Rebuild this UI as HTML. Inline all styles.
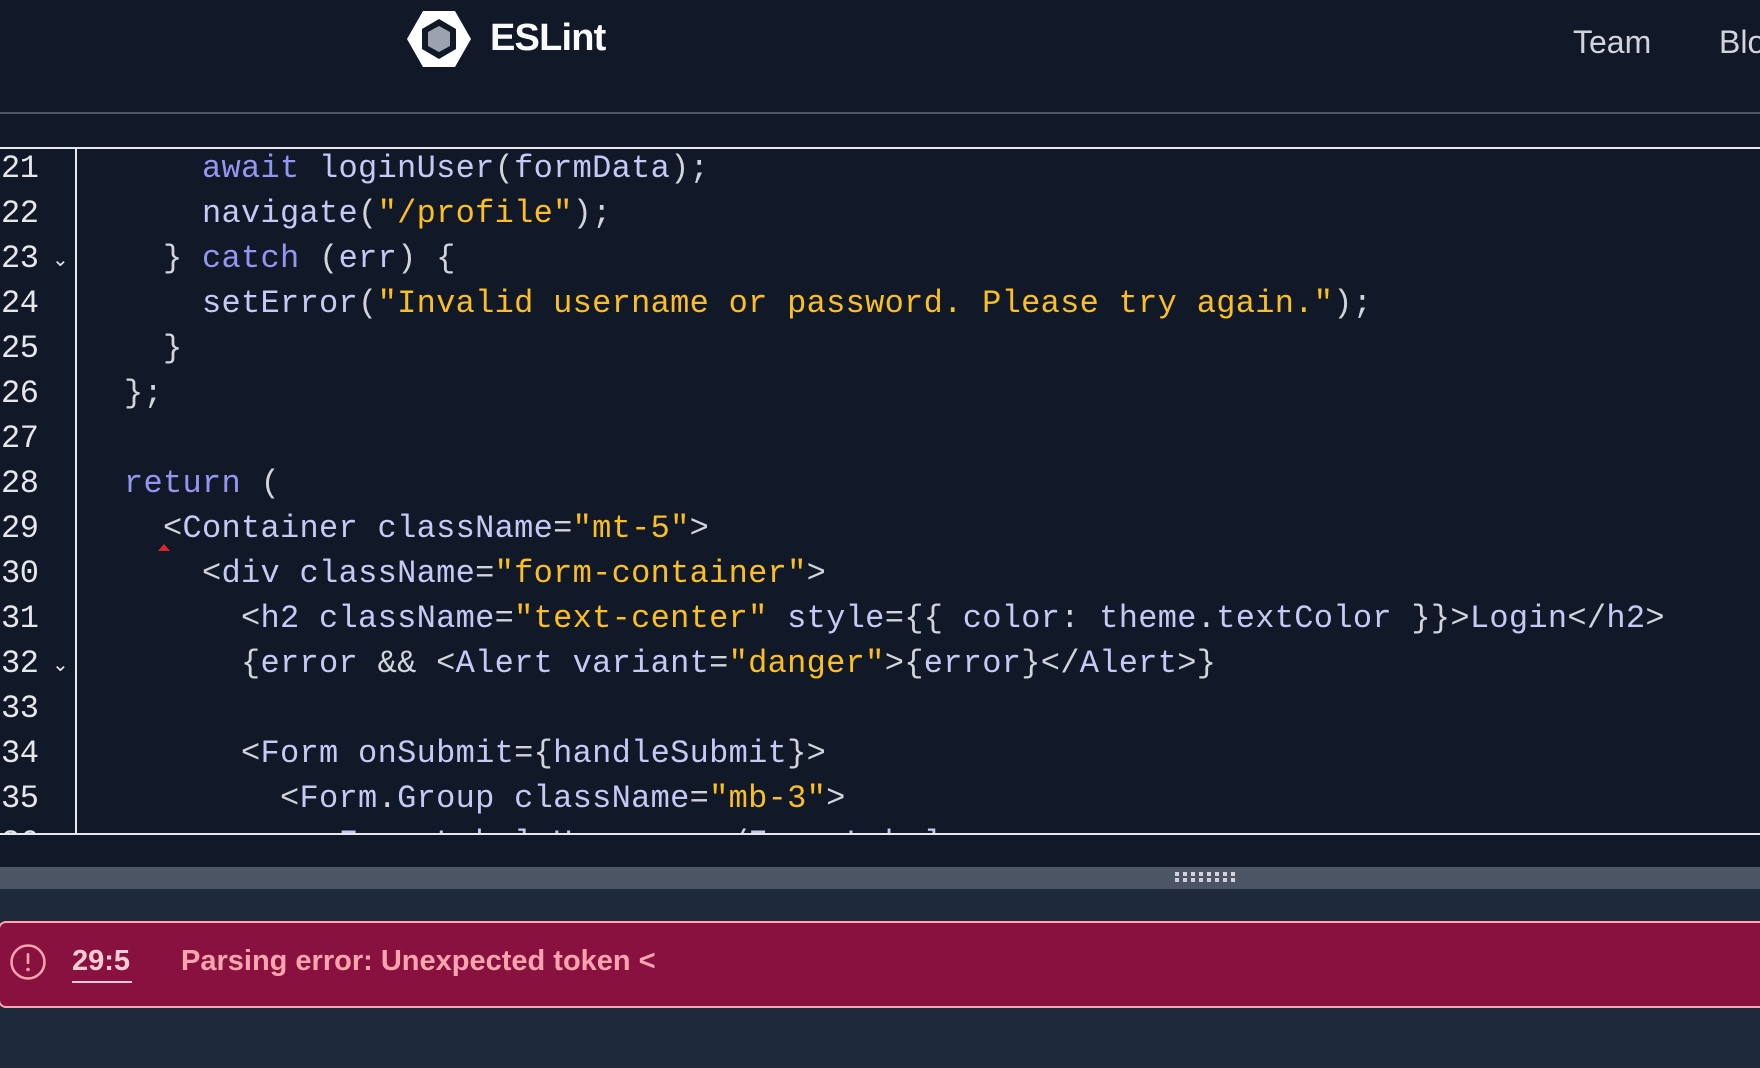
<!DOCTYPE html>
<html><head><meta charset="utf-8"><style>
*{margin:0;padding:0;box-sizing:border-box}
html,body{width:1760px;height:1068px;overflow:hidden;background:#111827;font-family:"Liberation Sans",sans-serif}
.hdr{position:absolute;left:0;top:0;width:1760px;height:114px;border-bottom:2px solid #4b5563}
.logo{position:absolute;left:406px;top:10px}
.brand{position:absolute;left:490px;top:17px;font-size:38px;font-weight:bold;color:#f9fafb;letter-spacing:-0.8px}
.nav{position:absolute;top:24px;font-size:32px;color:#d1d5db}
.ed{position:absolute;left:0;top:147px;width:1760px;height:688px;border-top:2px solid #e5e7eb;border-bottom:2px solid #e5e7eb;overflow:hidden}
.gut{position:absolute;left:75px;top:0;bottom:0;width:2px;background:#e5e7eb}
.row{position:absolute;left:0;height:45px;line-height:45px;font-family:"Liberation Mono",monospace;font-size:32px;white-space:pre;color:#c7c9f5;letter-spacing:0.3px}
.ln{position:absolute;left:1px;color:#e5e7eb;letter-spacing:-0.5px}
.code{position:absolute;left:85px}
.k{color:#9497f2}.s{color:#fbbf24}.p{color:#d1d5db}
.chev{position:absolute;left:52px;top:2px;font-size:20px;color:#e5e7eb;font-family:"Liberation Sans",sans-serif}
.bar{position:absolute;left:0;top:867px;width:1760px;height:22px;background:#4b5563}
.bot{position:absolute;left:0;top:889px;width:1760px;height:179px;background:#1e293b}
.err{position:absolute;left:-2px;top:921px;width:1780px;height:87px;background:#881140;border:2px solid #fda4af;border-radius:8px;color:#fda4af;font-size:29px}
</style></head><body>
<div class="hdr">
<svg class="logo" width="66" height="58" viewBox="0 0 66 58"><polygon points="17,1 49,1 65,29 49,57 17,57 1,29" fill="#fff"/><polygon points="33,9 50,19 50,39 33,49 16,39 16,19" fill="#111827"/><polygon points="33,16 44,22 44,36 33,42 22,36 22,22" fill="#9ca3af"/></svg>
<div class="brand">ESLint</div>
<div class="nav" style="left:1573px">Team</div>
<div class="nav" style="left:1719px">Blog</div>
</div>
<div class="ed">
<div class="gut"></div>
<div class="row" style="top:-3px"><span class="ln">21</span><span class="code">      <span class="k">await</span> loginUser<span class="p">(</span>formData<span class="p">);</span></span></div>
<div class="row" style="top:42px"><span class="ln">22</span><span class="code">      navigate<span class="p">(</span><span class="s">"/profile"</span><span class="p">);</span></span></div>
<div class="row" style="top:87px"><span class="ln">23</span><span class="chev">⌄</span><span class="code">    <span class="p">}</span> <span class="k">catch</span> <span class="p">(</span>err<span class="p">) {</span></span></div>
<div class="row" style="top:132px"><span class="ln">24</span><span class="code">      setError<span class="p">(</span><span class="s">"Invalid username or password. Please try again."</span><span class="p">);</span></span></div>
<div class="row" style="top:177px"><span class="ln">25</span><span class="code">    <span class="p">}</span></span></div>
<div class="row" style="top:222px"><span class="ln">26</span><span class="code">  <span class="p">};</span></span></div>
<div class="row" style="top:267px"><span class="ln">27</span></div>
<div class="row" style="top:312px"><span class="ln">28</span><span class="code">  <span class="k">return</span> <span class="p">(</span></span></div>
<div class="row" style="top:357px"><span class="ln">29</span><span class="code">    <span class="p">&lt;</span>Container className<span class="p">=</span><span class="s">"mt-5"</span><span class="p">&gt;</span></span></div>
<div class="row" style="top:402px"><span class="ln">30</span><span class="code">      <span class="p">&lt;</span>div className<span class="p">=</span><span class="s">"form-container"</span><span class="p">&gt;</span></span></div>
<div class="row" style="top:447px"><span class="ln">31</span><span class="code">        <span class="p">&lt;</span>h2 className<span class="p">=</span><span class="s">"text-center"</span> style<span class="p">={{</span> color<span class="p">:</span> theme<span class="p">.</span>textColor <span class="p">}}&gt;</span>Login<span class="p">&lt;/</span>h2<span class="p">&gt;</span></span></div>
<div class="row" style="top:492px"><span class="ln">32</span><span class="chev">⌄</span><span class="code">        <span class="p">{</span>error <span class="p">&amp;&amp; &lt;</span>Alert variant<span class="p">=</span><span class="s">"danger"</span><span class="p">&gt;{</span>error<span class="p">}&lt;/</span>Alert<span class="p">&gt;}</span></span></div>
<div class="row" style="top:537px"><span class="ln">33</span></div>
<div class="row" style="top:582px"><span class="ln">34</span><span class="code">        <span class="p">&lt;</span>Form onSubmit<span class="p">={</span>handleSubmit<span class="p">}&gt;</span></span></div>
<div class="row" style="top:627px"><span class="ln">35</span><span class="code">          <span class="p">&lt;</span>Form<span class="p">.</span>Group className<span class="p">=</span><span class="s">"mb-3"</span><span class="p">&gt;</span></span></div>
<div class="row" style="top:672px"><span class="ln">36</span><span class="code">            <span class="p">&lt;</span>Form<span class="p">.</span>Label<span class="p">&gt;</span>Username<span class="p">&lt;/</span>Form<span class="p">.</span>Label<span class="p">&gt;</span></span></div>
<svg style="position:absolute;left:158px;top:395px" width="12" height="7"><polygon points="6,0 12,7 0,7" fill="#dc2626"/></svg>
</div>
<div class="bar"><svg style="position:absolute;left:1175px;top:5px" width="62" height="12"><g fill="#d1d5db"><rect x="0" y="0" width="4" height="4"/><rect x="8" y="0" width="4" height="4"/><rect x="16" y="0" width="4" height="4"/><rect x="24" y="0" width="4" height="4"/><rect x="32" y="0" width="4" height="4"/><rect x="40" y="0" width="4" height="4"/><rect x="48" y="0" width="4" height="4"/><rect x="56" y="0" width="4" height="4"/><rect x="0" y="6" width="4" height="4"/><rect x="8" y="6" width="4" height="4"/><rect x="16" y="6" width="4" height="4"/><rect x="24" y="6" width="4" height="4"/><rect x="32" y="6" width="4" height="4"/><rect x="40" y="6" width="4" height="4"/><rect x="48" y="6" width="4" height="4"/><rect x="56" y="6" width="4" height="4"/></g></svg></div>
<div class="bot"></div>
<div class="err">
<svg style="position:absolute;left:9px;top:20px" width="38" height="38" viewBox="0 0 38 38"><circle cx="19" cy="19" r="16.5" fill="none" stroke="#fda4af" stroke-width="2.5"/><rect x="17.7" y="10" width="2.6" height="11" rx="1.3" fill="#fda4af"/><circle cx="19" cy="26.5" r="1.8" fill="#fda4af"/></svg>
<div style="position:absolute;left:72px;top:22px;font-weight:bold;color:#fecdd3">29:5</div>
<div style="position:absolute;left:72px;top:58px;width:60px;height:2px;background:#fecdd3"></div>
<div style="position:absolute;left:181px;top:22px;font-weight:bold">Parsing error: Unexpected token &lt;</div>
</div>
</body></html>
